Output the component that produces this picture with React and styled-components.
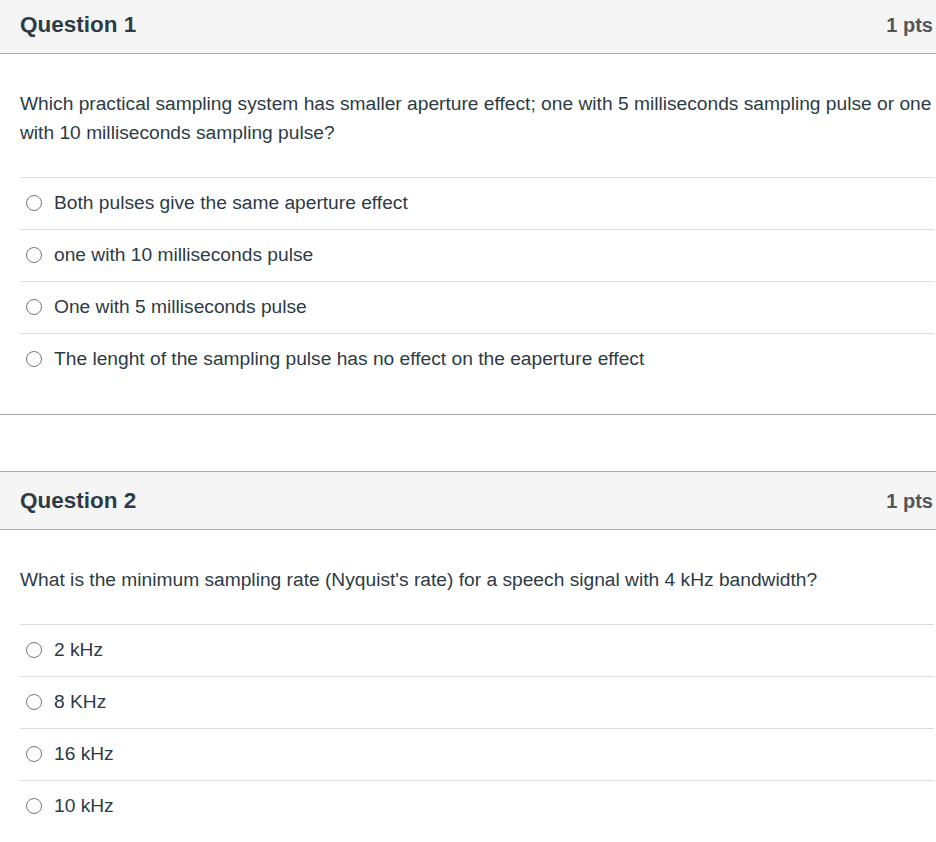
import React from "react";
import styled, { createGlobalStyle } from "styled-components";

const Global = createGlobalStyle`
  html, body { margin: 0; padding: 0; background: #fff; }
  body { font-family: "Liberation Sans", Arial, Helvetica, sans-serif; color: #2d3b45; }
`;

const Page = styled.div`
  width: 936px;
  margin-top: -5px;
  display: flex;
  flex-direction: column;
  gap: 56px;
`;

const QuestionBox = styled.section`
  border-top: 1px solid #aaaaaa;
  border-bottom: 1px solid #aaaaaa;
  background: #fff;
`;

const Header = styled.header`
  height: 58px;
  box-sizing: border-box;
  background: #f5f5f5;
  border-bottom: 1px solid #aaaaaa;
  display: flex;
  align-items: center;
  justify-content: space-between;
  padding: 1px 3px 0 20px;
`;

const Title = styled.h2`
  margin: 0;
  font-size: 22.5px;
  font-weight: 700;
  color: #2d3b45;
`;

const Points = styled.span`
  font-size: 20px;
  font-weight: 700;
  color: #555555;
`;

const Body = styled.div`
  padding: 35px 2px 29px 20px;
`;

const Prompt = styled.p`
  margin: 0 0 30px;
  font-size: 19.2px;
  line-height: 29px;
  color: #2d3b45;
`;

const Answers = styled.ul`
  list-style: none;
  margin: 0;
  padding: 0;
`;

const Answer = styled.li`
  height: 52px;
  box-sizing: border-box;
  border-top: 1px solid #dddddd;
  display: flex;
  align-items: center;
  gap: 12px;
  padding: 0 0 2px 6px;
  font-size: 19.2px;
  color: #2d3b45;
`;

const Radio = styled.span`
  width: 16px;
  height: 16px;
  box-sizing: border-box;
  border: 1.5px solid #777777;
  border-radius: 50%;
  flex: none;
`;

const questions = [
  {
    title: "Question 1",
    pts: "1 pts",
    prompt:
      "Which practical sampling system has smaller aperture effect; one with 5 milliseconds sampling pulse or one with 10 milliseconds sampling pulse?",
    answers: [
      "Both pulses give the same aperture effect",
      "one with 10 milliseconds pulse",
      "One with 5 milliseconds pulse",
      "The lenght of the sampling pulse has no effect on the eaperture effect",
    ],
  },
  {
    title: "Question 2",
    pts: "1 pts",
    prompt:
      "What is the minimum sampling rate (Nyquist's rate) for a speech signal with 4 kHz bandwidth?",
    answers: ["2 kHz", "8 KHz", "16 kHz", "10 kHz"],
  },
];

export default function App() {
  return (
    <>
      <Global />
      <Page>
        {questions.map((q) => (
          <QuestionBox key={q.title}>
            <Header>
              <Title>{q.title}</Title>
              <Points>{q.pts}</Points>
            </Header>
            <Body>
              <Prompt>{q.prompt}</Prompt>
              <Answers>
                {q.answers.map((a) => (
                  <Answer key={a}>
                    <Radio />
                    <span>{a}</span>
                  </Answer>
                ))}
              </Answers>
            </Body>
          </QuestionBox>
        ))}
      </Page>
    </>
  );
}
